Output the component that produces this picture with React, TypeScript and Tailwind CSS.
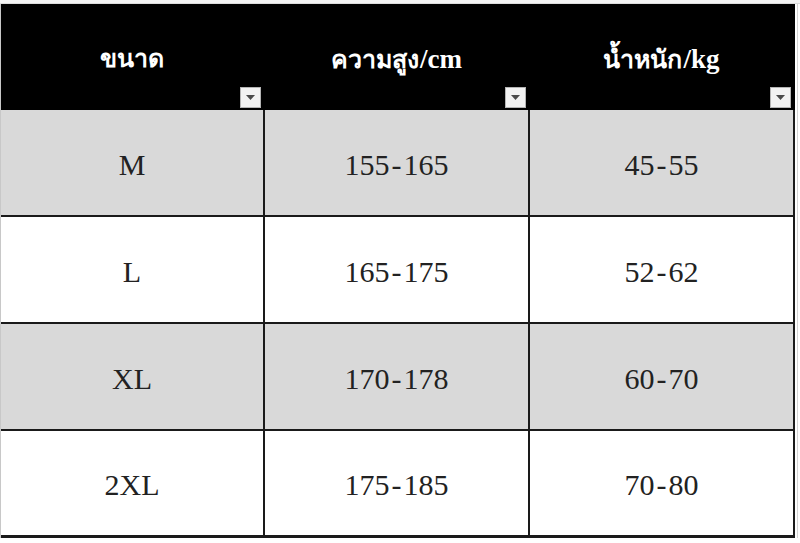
import React from 'react';

interface SizeRow {
  size: string;
  height: string;
  weight: string;
}

const rows: SizeRow[] = [
  { size: 'M', height: '155-165', weight: '45-55' },
  { size: 'L', height: '165-175', weight: '52-62' },
  { size: 'XL', height: '170-178', weight: '60-70' },
  { size: '2XL', height: '175-185', weight: '70-80' },
];

const headers = [
  { th: 'ขนาด', unit: '' },
  { th: 'ความสูง', unit: '/cm' },
  { th: 'น้ำหนัก', unit: '/kg' },
];

function FilterButton() {
  return (
    <div className="absolute right-[2px] bottom-[2px] w-[21px] h-[21px] bg-[#f2f2f2] border border-[#b4b4b4] flex items-center justify-center">
      <svg width="11" height="7" viewBox="0 0 11 7">
        <path d="M1 1 L10 1 L5.5 6 Z" fill="#4a4a4a" />
      </svg>
    </div>
  );
}

// keeps the hyphen but gives it the wider look of the original font
function Range({ value }: { value: string }) {
  const parts = value.split('-');
  if (parts.length < 2) return <>{value}</>;
  return (
    <>
      {parts[0]}
      <span className="mx-[2px]">-</span>
      {parts[1]}
    </>
  );
}

export default function App() {
  return (
    <div
      className="w-[800px] h-[543px] bg-white overflow-hidden relative"
      style={{ fontFamily: '"Liberation Serif", "Noto Sans", serif' }}
    >
      {/* top gridline strip */}
      <div className="h-[4px] bg-[#f4f4f4] border-b border-[#dcdcdc]" />

      <div className="flex">
        <div className="w-[1px] bg-[#c8c8c8]" />
        <div className="flex flex-col">
          {/* Header */}
          <div className="flex h-[106px] bg-black">
            {headers.map((h, i) => (
              <div
                key={h.th}
                className={`relative flex items-center justify-center ${i === 0 ? 'w-[264px]' : 'w-[265px]'} border-r-2 border-black`}
              >
                <span className="text-white font-bold text-[25px] mt-[4px]">
                  {h.th}
                  {h.unit && <span className="text-[27px] ml-[1px]">{h.unit}</span>}
                </span>
                <FilterButton />
              </div>
            ))}
          </div>

          {/* Body rows */}
          {rows.map((r, ri) => (
            <div
              key={r.size}
              className={`flex h-[107px] ${ri === rows.length - 1 ? 'border-b-[3px]' : 'border-b-2'} border-[#1a1a1a] ${
                ri % 2 === 0 ? 'bg-[#d9d9d9]' : 'bg-white'
              }`}
            >
              {[r.size, r.height, r.weight].map((v, ci) => (
                <div
                  key={ci}
                  className={`flex items-center justify-center ${ci === 0 ? 'w-[264px]' : 'w-[265px]'} border-r-2 border-[#1a1a1a]`}
                >
                  <span className="text-[30px] text-[#222] leading-none mt-[4px]">
                    <Range value={v} />
                  </span>
                </div>
              ))}
            </div>
          ))}
        </div>
        <div className="w-[2px]" />
        <div className="w-[1px] bg-[#d4d4d4]" />
      </div>
    </div>
  );
}
